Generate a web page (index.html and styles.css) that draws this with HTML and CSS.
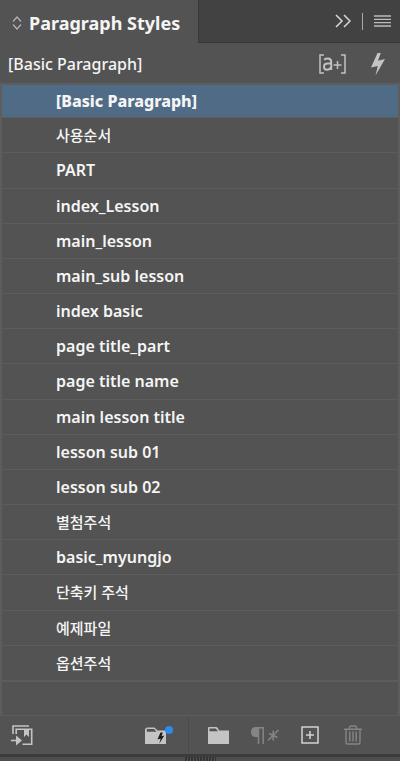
FILE: index.html
```html
<!DOCTYPE html>
<html lang="en">
<head>
<meta charset="utf-8">
<title>Paragraph Styles</title>
<link rel="stylesheet" href="styles.css">
</head>
<body>
<main class="panel">
  <header class="tabs">
    <button class="tab" type="button">
      <svg width="10" height="14" viewBox="0 0 10 14" fill="none" stroke="#b4b4b4" stroke-width="1.2"><path d="M1 5.5 5 1l4 4.500M1 8.500 5 13l4-4.500"/></svg>
      <span>Paragraph Styles</span>
    </button>
    <div class="tab-tools">
      <button type="button" aria-label="Collapse panel"><svg width="16" height="14" viewBox="0 0 16 14" fill="none" stroke="#d8d8d8" stroke-width="1.500"><path d="M1 1l6 6-6 6M9 1l6 6-6 6"/></svg></button>
      <span class="divider"></span>
      <button type="button" aria-label="Panel menu"><svg width="17" height="12" viewBox="0 0 17 12" stroke="#bcbcbc" stroke-width="1.300"><path d="M0 1h17M0 4.300h17M0 7.600h17M0 11h17"/></svg></button>
    </div>
  </header>
  <div class="current">
    <span class="current-name">[Basic Paragraph]</span>
    <button type="button" aria-label="Style override highlighter"><svg width="27" height="20" viewBox="0 0 27 20" fill="none" stroke="#c2c2c2" stroke-width="1.500"><path d="M5 1H1v18h4M22 1h4v18h-4M14.500 11h8M18.500 7v8"/><path stroke-width="2" d="M5 5.700Q7 4.500 9 4.500q3.200 0 3.200 3.500v8M12.200 9.500H9q-4 0-4 3.200 0 3 3 3 2.700 0 4.200-2.700"/></svg></button>
    <button type="button" aria-label="Clear overrides"><svg width="14" height="23" viewBox="0 0 14 23" fill="#c4c4c4"><path d="M6.500 0h3.300L7 7.800 14 6 4.500 22.500l2.300-9.500L0 14.500z"/></svg></button>
  </div>
  <ul class="list">
    <li class="selected">[Basic Paragraph]</li>
    <li class="ko">사용순서</li>
    <li>PART</li>
    <li>index_Lesson</li>
    <li>main_lesson</li>
    <li>main_sub lesson</li>
    <li>index basic</li>
    <li>page title_part</li>
    <li>page title name</li>
    <li>main lesson title</li>
    <li>lesson sub 01</li>
    <li>lesson sub 02</li>
    <li class="ko">별첨주석</li>
    <li>basic_myungjo</li>
    <li class="ko">단축키 주석</li>
    <li class="ko">예제파일</li>
    <li class="ko">옵션주석</li>
    <li class="empty"></li>
  </ul>
  <footer class="actions">
    <button class="load" type="button" aria-label="Load styles"><svg width="22" height="21" viewBox="0 0 22 21" fill="none" stroke="#c4c4c4" stroke-width="1.600"><path d="M2 9V1h16M5.200 9V4.200h15.500v15H11.500"/><path fill="#c4c4c4" stroke="none" d="M13 4h5v8l-2.500-2.500L13 12z"/><path d="M0 15.500h7"/><path fill="#c4c4c4" stroke="none" d="M5 10.500l6 5-6 5z"/></svg></button>
    <button class="cloud" type="button" aria-label="Add style to CC library"><svg width="28" height="19" viewBox="0 0 28 19"><path fill="#c4c4c4" d="M0 2.500h1.500V1.500h8l3 3H21V18H0z"/><path fill="#535353" d="M1.800 3h7.400l2.200 2.800H1.800z"/><path fill="#191919" d="M15.500 6.500h2.300l-1.300 3.700 2.800-.8-5 8 1.400-5-3.300 1z"/><circle cx="24" cy="4" r="4" fill="#2b8ceb"/></svg></button>
    <button class="group" type="button" aria-label="Create style group"><svg width="21" height="17" viewBox="0 0 21 17"><path fill="#c4c4c4" d="M0 1q0-1 1-1h7q1 0 1.700 1l1.500 2.500H21V17H0z"/><path fill="#535353" d="M1.500 1.500h6.300L10 4.300H1.500z"/></svg></button>
    <button class="clear" type="button" aria-label="Clear overrides in selection"><svg width="28" height="17" viewBox="0 0 28 17" fill="none" stroke="#858585" stroke-width="1.500"><path fill="#858585" stroke="none" d="M7 0v10H5Q0 10 0 5t5-5z"/><path d="M5 .8h8M7.500 0v17M12.200 0v17M17 13.500 27.500 3M22.200 3.500v10M18 6.500l8.500 4"/></svg></button>
    <button class="create" type="button" aria-label="Create new style"><svg width="18" height="18" viewBox="0 0 18 18" fill="none" stroke="#d2d2d2" stroke-width="1.500"><path d="M1 1h16v16H1zM5 9h8M9 5v8"/></svg></button>
    <button class="remove" type="button" aria-label="Delete selected style"><svg width="18" height="20" viewBox="0 0 18 20" fill="none" stroke="#858585" stroke-width="1.400"><path d="M0 4.200h18M5.500 4V2.500Q5.500 1 7 1h4q1.500 0 1.500 1.500V4M2 4v13.500Q2 19 3.500 19h11q1.500 0 1.500-1.500V4M5.800 6.500v10M9 6.500v10M12.200 6.500v10"/></svg></button>
  </footer>
  <div class="resize"><span class="grip"></span></div>
</main>
</body>
</html>
```
FILE: styles.css
```css
* {
  box-sizing: border-box;
}

body {
  margin: 0;
  background: #535353;
  color: #f5f5f5;
  font: 500 16px/20px "Noto Sans", "Noto Sans CJK KR", sans-serif;
}

button {
  display: flex;
  align-items: center;
  padding: 0;
  border: 0;
  background: none;
  color: inherit;
  font: inherit;
}

svg {
  display: block;
}

.panel {
  display: flex;
  flex-direction: column;
  min-height: 100vh;
}

.tabs {
  display: flex;
  height: 43px;
  background: #424242;
}

.tab {
  gap: 7px;
  padding: 2px 18px 0 12px;
  border-right: 1px solid #383838;
  background: #535353;
  font-size: 18px;
  font-weight: 700;
  white-space: nowrap;
}

.tab-tools {
  display: flex;
  flex: 1;
  align-items: center;
  justify-content: flex-end;
  gap: 11px;
  padding-right: 9px;
  border-bottom: 1px solid #383838;
}

.divider {
  width: 1px;
  height: 17px;
  background: #a8a8a8;
}

.current {
  display: flex;
  align-items: center;
  gap: 25px;
  height: 40px;
  padding: 2px 15px 0 8px;
}

.current-name {
  flex: 1;
}

.list {
  display: grid;
  flex: 1;
  grid-auto-rows: minmax(35px, 1fr);
  margin: 0;
  padding: 0;
  border: solid #5d5d5d;
  border-width: 0 2px;
  list-style: none;
  font-weight: 600;
}

.list li {
  display: flex;
  align-items: center;
  padding-left: 54px;
  border-bottom: 1px solid #5d5d5d;
}

.list .selected {
  border-top: 2px solid #5d5d5d;
  background: #4f6b85;
  font-weight: 800;
}

.list .ko {
  font-size: 15px;
  font-weight: 500;
}

.list .empty {
  border-top: 1px solid #5d5d5d;
}

.actions {
  display: flex;
  align-items: center;
  height: 38px;
  padding: 0 38px 0 11px;
}

.cloud {
  margin: 0 15px 0 auto;
}

.group {
  height: 34px;
  padding-left: 19px;
  border-left: 1px solid #4a4a4a;
}

.clear {
  margin-left: 22px;
}

.create {
  margin-left: 22px;
}

.remove {
  margin-left: 25px;
}

.resize {
  display: flex;
  justify-content: center;
  height: 7px;
  border-top: 3px solid #3b3b3b;
  background: #4e4e4e;
}

.grip {
  width: 31px;
  background: repeating-linear-gradient(90deg, #353535 0 2px, #505050 2px 3px);
}
```
